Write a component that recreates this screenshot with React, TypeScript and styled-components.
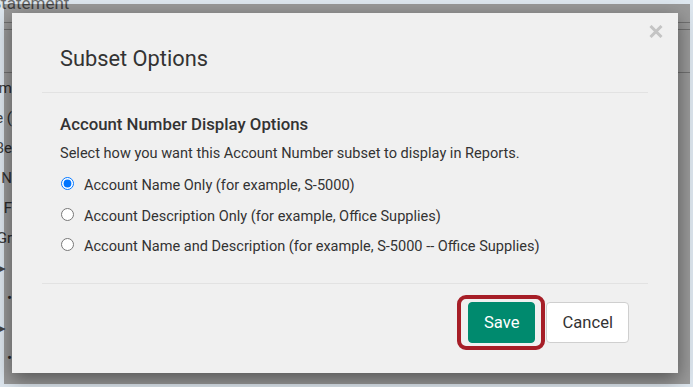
import React, { useState } from "react";
import styled, { createGlobalStyle } from "styled-components";

const GlobalStyle = createGlobalStyle`
  html, body {
    margin: 0;
    padding: 0;
    background: #dde6ee;
    font-family: Roboto, "Liberation Sans", sans-serif;
  }
`;

const Frame = styled.div`
  width: 693px;
  height: 387px;
  padding: 4px 3px 3px 4px;
  box-sizing: border-box;
`;

const Page = styled.div`
  position: relative;
  display: flow-root;
  width: 686px;
  height: 380px;
  background: #fff;
`;

const PageTitle = styled.div`
  margin: -10px 0 0 -13px;
  font-size: 17px;
  line-height: 18px;
  color: #6a6a6a;
`;

const Rule = styled.div<{ $top: number }>`
  height: 1px;
  margin-top: ${(p) => p.$top}px;
  background: #bdbdbd;
`;

const SideList = styled.div`
  display: flex;
  flex-direction: column;
  width: 60px;
  margin: 0 0 0 -52px;
  text-align: right;
  font-size: 15px;
  line-height: 30px;
  color: #444;
  overflow: hidden;
  white-space: nowrap;
`;

const SideItem = styled.div<{ $shift?: number }>`
  padding-right: ${(p) => p.$shift ?? 0}px;
`;

const Overlay = styled.div`
  position: absolute;
  inset: 0;
  background: rgba(0, 0, 0, 0.4);
  padding: 9px 0 0 8px;
`;

const Modal = styled.div`
  width: 666px;
  height: 360px;
  background: #f0f0f0;
  box-shadow: 0 6px 18px rgba(0, 0, 0, 0.45);
  padding: 0 30px;
  box-sizing: border-box;
  position: relative;
  display: flex;
  flex-direction: column;
`;

const CloseButton = styled.button`
  position: absolute;
  top: 12px;
  right: 15px;
  width: 14px;
  height: 13px;
  padding: 0;
  border: none;
  background: none;
  cursor: pointer;
  display: flex;
`;

const Header = styled.div`
  padding: 34px 18px 21px;
  border-bottom: 1px solid #e2e2e2;
`;

const Title = styled.h2`
  margin: 0;
  font-size: 21.8px;
  line-height: 24px;
  font-weight: 400;
  color: #333;
`;

const Body = styled.div`
  padding: 21px 18px 26px;
  border-bottom: 1px solid #e2e2e2;
  color: #333;
`;

const SectionTitle = styled.h3`
  margin: 0;
  font-size: 16.8px;
  line-height: 20px;
  font-weight: 500;
  color: #333;
`;

const Hint = styled.p`
  margin: 10px 0 12px;
  font-size: 14.55px;
  line-height: 20px;
`;

const Options = styled.div`
  display: flex;
  flex-direction: column;
  gap: 10.5px;
`;

const Option = styled.label`
  display: flex;
  align-items: flex-start;
  gap: 10px;
  font-size: 14.55px;
  line-height: 20px;
  cursor: pointer;
`;

const Radio = styled.input`
  width: 13px;
  height: 13px;
  margin: 1px 0 0 1px;
  flex: none;
`;

const Footer = styled.div`
  display: flex;
  justify-content: flex-end;
  gap: 11px;
  padding: 18px 19px 30px;
`;

const Button = styled.button<{ $primary?: boolean }>`
  height: 41px;
  padding: 0 15px;
  border-radius: 4px;
  font-family: Roboto, "Liberation Sans", sans-serif;
  font-size: 16.6px;
  cursor: pointer;
  border: 1px solid ${(p) => (p.$primary ? "#008a6e" : "#cfcfcf")};
  background: ${(p) => (p.$primary ? "#008a6e" : "#fff")};
  color: ${(p) => (p.$primary ? "#fff" : "#333")};
`;

const Highlight = styled.div`
  position: relative;
  display: flex;

  &::after {
    content: "";
    position: absolute;
    inset: -7px -10px -7px -11px;
    border: 4px solid #a61e27;
    border-radius: 9px;
    pointer-events: none;
  }
`;

const options = [
  "Account Name Only (for example, S-5000)",
  "Account Description Only (for example, Office Supplies)",
  "Account Name and Description (for example, S-5000 -- Office Supplies)",
];

export default function App() {
  const [choice, setChoice] = useState(0);

  return (
    <Frame>
      <GlobalStyle />
      <Page>
        <PageTitle>Statement</PageTitle>
        <Rule $top={10} />
        <Rule $top={6} />
        <Rule $top={42} />
        <SideList>
          <SideItem>Sum</SideItem>
          <SideItem>Type (</SideItem>
          <SideItem>Be</SideItem>
          <SideItem>N</SideItem>
          <SideItem>F</SideItem>
          <SideItem>Gr</SideItem>
          <SideItem $shift={6}>▸</SideItem>
          <SideItem>•</SideItem>
          <SideItem $shift={6}>▸</SideItem>
          <SideItem>•</SideItem>
        </SideList>
        <Overlay>
          <Modal>
            <CloseButton aria-label="Close">
              <svg width="14" height="13" viewBox="0 0 14 13">
                <path d="M1.5 1 L12.5 12 M12.5 1 L1.5 12" stroke="#c4c4c4" strokeWidth="3" />
              </svg>
            </CloseButton>
            <Header>
              <Title>Subset Options</Title>
            </Header>
            <Body>
              <SectionTitle>Account Number Display Options</SectionTitle>
              <Hint>Select how you want this Account Number subset to display in Reports.</Hint>
              <Options>
                {options.map((text, i) => (
                  <Option key={text}>
                    <Radio
                      type="radio"
                      name="display"
                      checked={choice === i}
                      onChange={() => setChoice(i)}
                    />
                    {text}
                  </Option>
                ))}
              </Options>
            </Body>
            <Footer>
              <Highlight>
                <Button $primary>Save</Button>
              </Highlight>
              <Button>Cancel</Button>
            </Footer>
          </Modal>
        </Overlay>
      </Page>
    </Frame>
  );
}
